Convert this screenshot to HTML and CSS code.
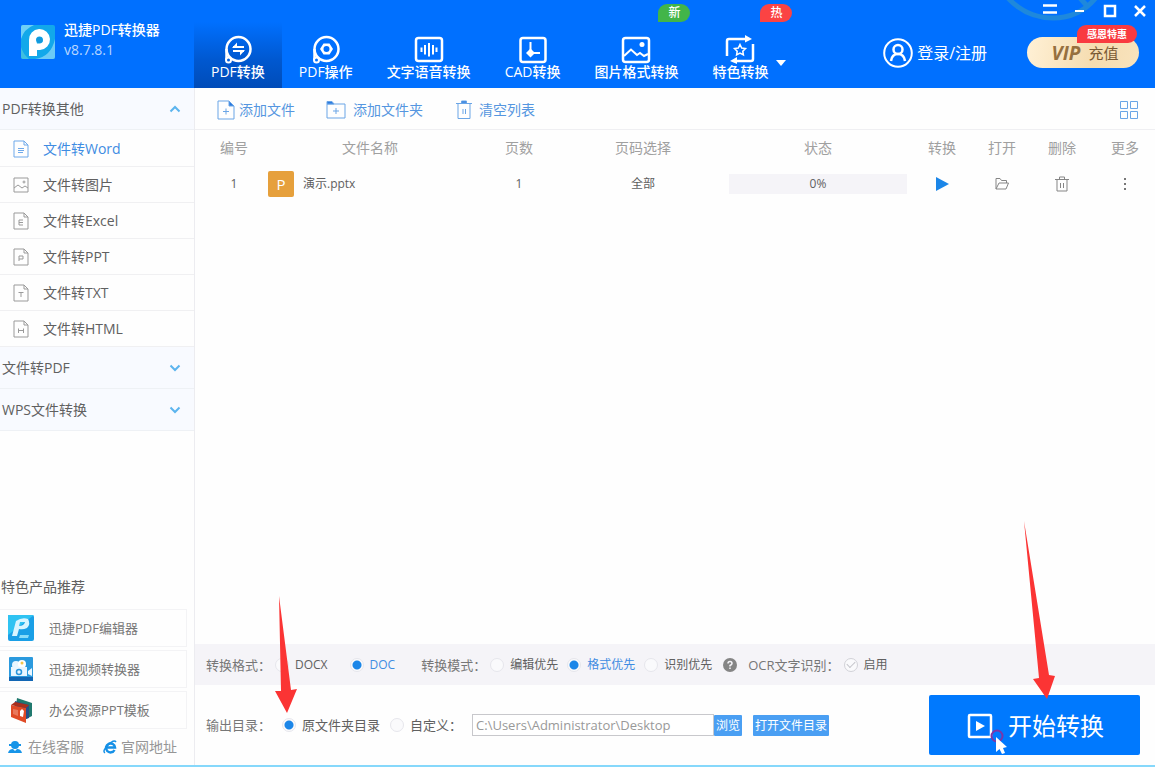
FILE: index.html
```html
<!DOCTYPE html>
<html lang="zh-CN">
<head>
<meta charset="utf-8">
<title>迅捷PDF转换器</title>
<link rel="stylesheet" href="styles.css">
</head>
<body>
<header class="header">
  <div class="brand">
    <svg class="brand-logo" viewBox="0 0 34 34" width="34" height="34" aria-hidden="true">
      <rect width="34" height="34" rx="2" fill="#12a8ea"/>
      <path d="M0 2Q0 0 2 0H13Q3 4 0 14Z" fill="#6fd0f6"/>
      <path d="M34 14V32Q34 34 32 34H14Q30 32 34 14Z" fill="#6ccbf6"/>
      <path d="M2 34Q0 34 0 32V22Q2 29 8 34Z" fill="#3fbfe0"/>
      <path fill-rule="evenodd" d="M8 31V15A10.500 10.500 0 1 1 19 25H16V31ZM16 18.500H19A3.500 3.500 0 1 0 15 15Z" fill="#fff"/>
      <circle cx="18.500" cy="15" r="3" fill="#1498dc"/>
    </svg>
    <div class="brand-text">
      <h1 class="brand-name">迅捷PDF转换器</h1>
      <span class="brand-version">v8.7.8.1</span>
    </div>
  </div>
  <nav class="tabs">
    <button class="tab tab-active" type="button">
      <svg viewBox="0 0 30 30" width="30" height="30" class="line-icon" aria-hidden="true"><circle cx="15.500" cy="15" r="12" stroke-width="2.500"/><path d="M3.500 15V26" stroke-width="2.500"/><circle cx="5.500" cy="26" r="2.500" fill="#0060e0" stroke-width="2"/><path d="M10 13H21M10 17H21" stroke-width="2"/><path d="M14 8.500L9 14H14ZM17 21.500L22 16H17Z" fill="#fff" stroke="none"/></svg>
      <span>PDF转换</span>
    </button>
    <button class="tab" type="button">
      <svg viewBox="0 0 30 30" width="30" height="30" class="line-icon" aria-hidden="true"><circle cx="15.500" cy="15" r="12" stroke-width="2.500"/><path d="M3.500 15V26" stroke-width="2.500"/><circle cx="5.500" cy="26" r="2.500" fill="#0070ff" stroke-width="2"/><path d="M12.500 9.500H18.500L22 15L18.500 20.500H12.500L9 15ZM15.500 12A3 3 0 1 0 15.500 18A3 3 0 1 0 15.500 12Z" fill="#fff" fill-rule="evenodd" stroke="none"/></svg>
      <span>PDF操作</span>
    </button>
    <button class="tab" type="button">
      <svg viewBox="0 0 30 30" width="30" height="30" class="line-icon" aria-hidden="true"><rect x="2" y="4" width="26" height="23" rx="2.500" stroke-width="2.500"/><path d="M7.500 13.500V18M11 11V20.500M15 9V22.500M19 11V20.500M22.500 13.500V18" stroke-width="2"/></svg>
      <span>文字语音转换</span>
    </button>
    <button class="tab" type="button">
      <svg viewBox="0 0 30 30" width="30" height="30" class="line-icon" aria-hidden="true"><rect x="2.500" y="4" width="25" height="24" rx="2.500" stroke-width="2.500"/><path d="M12.500 8V19H22" stroke-width="2"/><path d="M12.500 14.500L17 19L12.500 23.500L8 19Z" fill="#fff" stroke="none"/></svg>
      <span>CAD转换</span>
    </button>
    <button class="tab" type="button">
      <svg viewBox="0 0 30 30" width="30" height="30" class="line-icon" aria-hidden="true"><rect x="2" y="4" width="26" height="24" rx="2.500" stroke-width="2.500"/><path d="M3 22L10 15.500L16 21L19 19L23 22L27 20" stroke-width="2"/><circle cx="21" cy="10.500" r="2.500" fill="#fff" stroke="none"/></svg>
      <span>图片格式转换</span>
      <span class="badge badge-new">新</span>
    </button>
    <button class="tab" type="button">
      <svg viewBox="0 0 30 30" width="30" height="30" class="line-icon" aria-hidden="true"><path d="M2 22V7Q2 5 4 5H22M28 10V25Q28 27 26 27H10" stroke-width="2.500"/><path d="M20 1L27 5L20 8.500ZM12 23L5 27L12 30Z" fill="#fff" stroke="none"/><path d="M15 10.500L16.700 14L20.500 14.500L17.800 17.200L18.400 21L15 19.200L11.600 21L12.200 17.200L9.500 14.500L13.300 14Z" stroke-width="1.500"/></svg>
      <span>特色转换</span>
      <span class="badge badge-hot">热</span>
      <svg class="tab-caret" viewBox="0 0 10 6" width="10" height="6" aria-hidden="true"><path d="M0 0H10L5 6Z" fill="#fff"/></svg>
    </button>
  </nav>
  <div class="header-right">
    <svg class="header-arc" viewBox="0 0 110 24" width="110" height="24" aria-hidden="true"><path d="M2 -3Q21 18 48 18Q76 18 93 -5M75 -2L83 7" fill="none" stroke="#1e88dc" stroke-width="5"/></svg>
    <div class="window-controls">
      <button type="button" aria-label="菜单"><svg viewBox="0 0 16 16" width="16" height="16"><path d="M1 2.500H15M1 9.500H15" stroke="#fff" stroke-width="2.500"/></svg></button>
      <button type="button" aria-label="最小化"><svg viewBox="0 0 16 16" width="16" height="16"><path d="M3 8H12" stroke="#fff" stroke-width="2"/></svg></button>
      <button type="button" aria-label="最大化"><svg viewBox="0 0 16 16" width="16" height="16"><rect x="3" y="3" width="10" height="10" fill="none" stroke="#fff" stroke-width="2.500"/></svg></button>
      <button type="button" aria-label="关闭"><svg viewBox="0 0 16 16" width="16" height="16"><path d="M3 3L13 13M13 3L3 13" stroke="#fff" stroke-width="2.500"/></svg></button>
    </div>
    <div class="account">
      <button class="login" type="button">
        <svg viewBox="0 0 30 30" width="30" height="30" class="line-icon" aria-hidden="true"><circle cx="15" cy="15" r="13.800" stroke-width="2"/><circle cx="15" cy="11.500" r="4.500" stroke-width="2.500"/><path d="M8 23Q9 16 15 16T22 23" stroke-width="2.500"/></svg>
        <span>登录/注册</span>
      </button>
      <button class="vip" type="button">
        <span class="vip-mark">VIP</span><span>充值</span>
        <span class="vip-badge">感恩特惠</span>
      </button>
    </div>
  </div>
</header>

<div class="body">
  <aside class="sidebar">
    <button class="group" type="button"><span>PDF转换其他</span><svg viewBox="0 0 12 8" width="12" height="8" class="chevron" aria-hidden="true"><path d="M1.500 6.500L6 2L10.500 6.500"/></svg></button>
    <ul class="items">
      <li><a class="item item-active" href="#"><svg viewBox="0 0 16 18" width="16" height="18" aria-hidden="true"><path d="M1 1H11L15 5V17H1ZM11 1V5H15"/><path d="M5 8.500H11M5 10.500H11M5 12.500H10"/></svg>文件转Word</a></li>
      <li><a class="item" href="#"><svg viewBox="0 0 16 18" width="16" height="18" aria-hidden="true"><path d="M1 2H15V16H1ZM1 12L5 9L9 12L12 10L15 12"/><circle cx="11" cy="6" r="1"/></svg>文件转图片</a></li>
      <li><a class="item" href="#"><svg viewBox="0 0 16 18" width="16" height="18" aria-hidden="true"><path d="M1 1H11L15 5V17H1ZM11 1V5H15"/><path d="M10 8H6V13H10M6 10.500H10"/></svg>文件转Excel</a></li>
      <li><a class="item" href="#"><svg viewBox="0 0 16 18" width="16" height="18" aria-hidden="true"><path d="M1 1H11L15 5V17H1ZM11 1V5H15"/><path d="M6 13V8H10V11H6"/></svg>文件转PPT</a></li>
      <li><a class="item" href="#"><svg viewBox="0 0 16 18" width="16" height="18" aria-hidden="true"><path d="M1 1H11L15 5V17H1ZM11 1V5H15"/><path d="M5.500 8.500H10.500M8 8.500V13"/></svg>文件转TXT</a></li>
      <li><a class="item" href="#"><svg viewBox="0 0 16 18" width="16" height="18" aria-hidden="true"><path d="M1 1H11L15 5V17H1ZM11 1V5H15"/><path d="M5.500 8.500V13M10.500 8.500V13M5.500 10.500H10.500"/></svg>文件转HTML</a></li>
    </ul>
    <button class="group" type="button"><span>文件转PDF</span><svg viewBox="0 0 12 8" width="12" height="8" class="chevron" aria-hidden="true"><path d="M1.500 1.500L6 6L10.500 1.500"/></svg></button>
    <button class="group" type="button"><span>WPS文件转换</span><svg viewBox="0 0 12 8" width="12" height="8" class="chevron" aria-hidden="true"><path d="M1.500 1.500L6 6L10.500 1.500"/></svg></button>

    <section class="promo">
      <h2 class="promo-title">特色产品推荐</h2>
      <a class="promo-card" href="#">
        <svg viewBox="0 0 26 26" width="26" height="26" aria-hidden="true"><rect width="26" height="26" rx="2" fill="#1a9fe6"/><path d="M0 0H26L0 20Z" fill="#2fc3f2"/><path fill-rule="evenodd" d="M4 21L8 6Q14 2 20 4Q23 9 19 13Q15 15 11 14L9 21ZM12 7L11 11Q16 11 17 7Z" fill="#d9f5ff"/><path d="M12 20H21L20 23H11Z" fill="#8adcf8"/></svg>
        迅捷PDF编辑器
      </a>
      <a class="promo-card" href="#">
        <svg viewBox="0 0 26 26" width="26" height="26" aria-hidden="true"><rect x="1" y="1" width="24" height="24" rx="1" fill="#2b9ade"/><path d="M1 21H25V25H1Z" fill="#1266b4"/><circle cx="8" cy="9" r="4" fill="#e9f6ff"/><circle cx="14" cy="8" r="4" fill="#fff"/><circle cx="14" cy="7" r="1.500" fill="#f3c54b"/><path d="M3 11H19V20H3ZM20 15L24 12V20L20 18Z" fill="#eaf6ff"/><circle cx="11" cy="16" r="2.500" fill="none" stroke="#2b96dc" stroke-width="1.500"/></svg>
        迅捷视频转换器
      </a>
      <a class="promo-card" href="#">
        <svg viewBox="0 0 26 26" width="26" height="26" aria-hidden="true"><path d="M9 1L24 6V19L18 22L7 17Z" fill="#20796e"/><path d="M7 4L21 8V21L15 23L6 18Z" fill="#264f86"/><path d="M3 8L18 11V26L3 20Z" fill="#df4a26"/><path d="M3 8L7 5L21 8L18 11Z" fill="#a92f1c"/><path d="M5 12L10 13V19L5 17Z" fill="#e8785c"/><path d="M12 14L14 12L16 14L15 20L12 19Z" fill="#fff"/></svg>
        办公资源PPT模板
      </a>
      <div class="promo-links">
        <a href="#"><svg viewBox="0 0 14 14" width="14" height="14" aria-hidden="true"><circle cx="7" cy="5" r="4" fill="#1694e8"/><path d="M1 5H13" stroke="#1694e8" stroke-width="2"/><path d="M0 13Q1 9 5 9L7 11L9 9Q13 9 14 13Z" fill="#1694e8"/></svg>在线客服</a>
        <a href="#"><svg viewBox="0 0 14 14" width="14" height="14" aria-hidden="true"><path d="M11.500 10A4.500 4.500 0 1 1 12 7.500H4" fill="none" stroke="#1590e6" stroke-width="2.500"/><path d="M2 13Q-1 11 5 5Q11 -1 13 2" fill="none" stroke="#1590e6" stroke-width="1.500"/></svg>官网地址</a>
      </div>
    </section>
  </aside>

  <main class="main">
    <div class="toolbar">
      <button type="button"><svg viewBox="0 0 18 20" width="18" height="20" aria-hidden="true"><path d="M1 1H12L17 6V19H1Z"/><path d="M12 1V6H17Z" fill="#2b7be0"/><path d="M6 11.500H12M9 8.500V14.500"/></svg>添加文件</button>
      <button type="button"><svg viewBox="0 0 20 20" width="20" height="20" aria-hidden="true"><path d="M1 4H19V18H1Z"/><path d="M1 1.500H6L8 4H1Z" fill="#2b7be0"/><path d="M7 11H13M10 8V14"/></svg>添加文件夹</button>
      <button type="button"><svg viewBox="0 0 16 20" width="16" height="20" aria-hidden="true"><path d="M0 3.500H16M2 4V18.500H14V4M7 9V14M9.500 9V14"/><path d="M5.500 1H10.500V3H5.500Z" fill="#2b7be0"/></svg>清空列表</button>
      <button class="view-toggle" type="button" aria-label="切换视图"><svg viewBox="0 0 20 20" width="20" height="20" aria-hidden="true"><path d="M1.500 1.500H8.500V8.500H1.500ZM11.500 1.500H18.500V8.500H11.500ZM1.500 11.500H8.500V18.500H1.500ZM11.500 11.500H18.500V18.500H11.500Z"/></svg></button>
    </div>
    <div class="list">
      <table class="files">
        <colgroup>
          <col class="col-no"><col class="col-name"><col class="col-pages"><col class="col-range"><col class="col-status"><col class="col-convert"><col class="col-open"><col class="col-delete"><col class="col-more">
        </colgroup>
        <thead>
          <tr><th>编号</th><th>文件名称</th><th>页数</th><th>页码选择</th><th>状态</th><th>转换</th><th>打开</th><th>删除</th><th>更多</th></tr>
        </thead>
        <tbody>
          <tr>
            <td>1</td>
            <td><div class="file"><span class="file-type">P</span>演示.pptx</div></td>
            <td>1</td>
            <td>全部</td>
            <td><div class="progress">0%</div></td>
            <td><button type="button" aria-label="转换"><svg viewBox="0 0 16 16" width="16" height="16"><path d="M2 1L15 8L2 15Z" fill="#1b86e8"/></svg></button></td>
            <td><button type="button" aria-label="打开"><svg viewBox="0 0 16 16" width="16" height="16" class="row-icon"><path d="M2 13V2.500H6L7.500 4.500H12.500V7M2 13L5 7H14.500L12 13Z"/></svg></button></td>
            <td><button type="button" aria-label="删除"><svg viewBox="0 0 16 16" width="16" height="16" class="row-icon"><path d="M1 3.500H15M5.500 3V1H10.500V3M3 4V15H13V4M6.500 7V12M9.500 7V12"/></svg></button></td>
            <td><button type="button" aria-label="更多"><svg viewBox="0 0 16 16" width="16" height="16"><path d="M7 2H9V4H7ZM7 7H9V9H7ZM7 12H9V14H7Z" fill="#777"/></svg></button></td>
          </tr>
        </tbody>
      </table>
    </div>

    <div class="options">
      <span class="caption">转换格式：</span>
      <label class="choice"><input type="radio" name="format">DOCX</label>
      <label class="choice choice-far"><input type="radio" name="format" checked><span>DOC</span></label>
      <span class="caption caption-next">转换模式：</span>
      <label class="choice"><input type="radio" name="mode">编辑优先</label>
      <label class="choice choice-near"><input type="radio" name="mode" checked><span>格式优先</span></label>
      <label class="choice choice-near"><input type="radio" name="mode">识别优先</label>
      <button class="help" type="button" aria-label="帮助"><svg viewBox="0 0 14 14" width="14" height="14"><circle cx="7" cy="7" r="7" fill="#858585"/><path d="M5 5.500Q5 3.500 7 3.500T9 5.500Q9 6.500 7 7.500V8.500M7 9.500V11" fill="none" stroke="#f5f4f8" stroke-width="1.500"/></svg></button>
      <span class="caption">OCR文字识别：</span>
      <label class="choice"><input type="checkbox">启用</label>
    </div>

    <div class="output">
      <span class="caption">输出目录：</span>
      <span class="guide-anchor">
        <label class="choice choice-dir"><input type="radio" name="dir" checked>原文件夹目录</label>
        <svg class="guide guide-dir" viewBox="0 0 24 118" width="24" height="118" aria-hidden="true"><path d="M5 0L17 94L23 93L13 117L1 95H7Z" fill="#fb3434"/></svg>
      </span>
      <label class="choice choice-dir choice-custom"><input type="radio" name="dir">自定义：</label>
      <div class="path">
        <input type="text" aria-label="输出路径" value="C:\Users\Administrator\Desktop">
        <button class="small-btn" type="button">浏览</button>
      </div>
      <button class="small-btn open-dir" type="button">打开文件目录</button>
      <div class="start-wrap">
        <button class="start" type="button">
          <svg viewBox="0 0 26 26" width="26" height="26" aria-hidden="true"><rect x="2" y="2" width="22" height="22" rx="1" fill="none" stroke="#fff" stroke-width="2.500"/><path d="M9 8L18 13L9 18Z" fill="#fff"/></svg>
          开始转换
        </button>
        <svg class="guide guide-start" viewBox="0 0 34 180" width="34" height="180" aria-hidden="true"><path d="M1 0L26 154L32 155L24 178L10 158L16 157Z" fill="#fb3434"/></svg>
        <svg class="pointer" viewBox="0 0 20 26" width="20" height="26" aria-hidden="true"><circle cx="7" cy="7" r="5.500" fill="none" stroke="#7b36a8" stroke-width="2"/><path d="M6 8V23L9.500 20L12 25L15 24L13 19L17 18Z" fill="#fff"/></svg>
      </div>
    </div>
  </main>
</div>
</body>
</html>
```

FILE: styles.css
```css
* { box-sizing: border-box; }

body {
  margin: 0;
  min-height: 100vh;
  display: flex;
  flex-direction: column;
  font: 14px/20px "Open Sans", "Noto Sans CJK SC", sans-serif;
  color: #606060;
  background: #fefefe;
  border-bottom: 2px solid #86d8fb;
}

button {
  margin: 0;
  padding: 0;
  border: 0;
  background: none;
  font: inherit;
  color: inherit;
}

svg { display: block; flex: none; }
a { color: inherit; text-decoration: none; }

.line-icon { fill: none; stroke: #fff; }

/* Header */
.header {
  display: flex;
  height: 88px;
  background: #0070ff;
  color: #fff;
}

.brand {
  display: flex;
  gap: 9px;
  width: 194px;
  padding: 20px 0 0 21px;
}

.brand-logo { margin-top: 5px; }
.brand-text { display: flex; flex-direction: column; }
.brand-name { margin: 0; font-size: 14px; font-weight: 500; line-height: 20px; }
.brand-version { color: #b9d7ff; }

.tabs { display: flex; }

.tab {
  position: relative;
  display: flex;
  flex-direction: column;
  align-items: center;
  padding: 34px 17px 0;
  line-height: 16px;
  font-weight: 500;
  white-space: nowrap;
}

.tab-active { background: linear-gradient(#0070ff 22px, #0058d0 60px, #004cb8); }

.tab-caret { position: absolute; left: 81px; top: 60px; }

.badge {
  position: absolute;
  top: 4px;
  width: 32px;
  height: 18px;
  border-radius: 9px 9px 9px 0;
  font-size: 12px;
  line-height: 18px;
}

.badge-new { left: 81px; background: #42b549; }
.badge-hot { left: 65px; background: #fb4343; }

.header-right {
  position: relative;
  display: flex;
  flex-direction: column;
  align-items: flex-end;
  gap: 17px;
  margin-left: auto;
}

.header-arc { position: absolute; top: 0; right: 40px; }

.window-controls {
  position: relative;
  display: flex;
  gap: 14px;
  height: 20px;
  padding: 2px 7px 0 0;
}

.account { display: flex; align-items: center; gap: 40px; padding-right: 16px; }
.login { display: flex; align-items: center; gap: 4px; font-size: 16px; }

.vip {
  position: relative;
  display: flex;
  align-items: center;
  justify-content: center;
  gap: 8px;
  width: 112px;
  height: 31px;
  padding-left: 4px;
  border-radius: 16px;
  background: linear-gradient(100deg, #fff1d6, #f5dcb0 60%, #f8e3bd);
  color: #7a5a34;
  font-size: 15px;
}

.vip-mark { font-size: 19px; font-weight: 700; font-style: italic; color: #96703f; }

.vip-badge {
  position: absolute;
  top: -12px;
  right: 2px;
  width: 60px;
  height: 18px;
  border-radius: 9px 9px 9px 0;
  background: #f93a40;
  color: #fff;
  font-size: 10px;
  font-weight: 700;
  line-height: 18px;
}

/* Body */
.body { display: flex; flex: 1; }

.sidebar {
  display: flex;
  flex-direction: column;
  width: 195px;
  flex: none;
  border-right: 1px solid #ececf0;
}

.group {
  display: flex;
  align-items: center;
  justify-content: space-between;
  height: 42px;
  padding: 1px 13px 0 2px;
  border-bottom: 1px solid #eef1f5;
  background: #f8faff;
}

.chevron { fill: none; stroke: #5cb4ee; stroke-width: 2; }

.items { margin: 0; padding: 1px 0 0; list-style: none; }

.item {
  display: flex;
  align-items: center;
  gap: 14px;
  height: 36px;
  padding-left: 13px;
  border-bottom: 1px solid #f0f0f2;
}

.item svg { fill: none; stroke: #9a9a9a; }
.item-active { color: #3f8ce2; }
.item-active svg { stroke: #6fa9ea; }

.promo { margin-top: auto; padding-bottom: 8px; }
.promo-title { margin: 0 0 12px; padding-left: 1px; font-size: 14px; font-weight: 400; }

.promo-card {
  display: flex;
  align-items: center;
  gap: 15px;
  height: 38px;
  margin: 0 7px 3px 0;
  padding-left: 8px;
  border: 1px solid #f3f3f5;
  border-left: 0;
  color: #777;
  font-size: 13px;
}

.promo-links { display: flex; gap: 19px; padding: 5px 0 0 8px; color: #969696; }
.promo-links a { display: flex; align-items: center; gap: 6px; }
.promo-links a + a { gap: 4px; }

.main { display: flex; flex-direction: column; flex: 1; min-width: 0; }

.toolbar {
  display: flex;
  align-items: center;
  gap: 31px;
  height: 42px;
  padding: 2px 16px 0 22px;
  border-bottom: 1px solid #efeff2;
  color: #5596e0;
}

.toolbar button { display: flex; align-items: center; gap: 4px; }
.toolbar button + button { gap: 7px; }
.toolbar button:nth-child(3) { margin-left: 2px; }
.toolbar svg { fill: none; stroke: #6aa5e6; }
.toolbar .view-toggle { margin-left: auto; }

.list { flex: 1; }

.files { width: 100%; table-layout: fixed; border-collapse: collapse; }
.col-no { width: 73px; }
.col-pages { width: 94px; }
.col-range { width: 154px; }
.col-status { width: 196px; }
.col-convert, .col-delete { width: 52px; }
.col-open { width: 68px; }
.col-more { width: 67px; }

.files th, .files td { height: 36px; padding: 0; text-align: center; }
.files th { color: #a0a0a0; font-weight: 400; }
.files td { font-size: 12px; }
.files th:first-child, .files td:first-child { padding-left: 5px; }
.files th:last-child, .files td:last-child { padding-left: 7px; }
.files td button { display: block; margin: 0 auto; }
.row-icon { fill: none; stroke: #858585; }

.file { display: flex; align-items: center; gap: 9px; }

.file-type {
  width: 26px;
  height: 26px;
  border-radius: 2px;
  background: #e6a03c;
  color: #fff;
  font-size: 15px;
  line-height: 26px;
}

.progress { height: 20px; margin: 0 9px; background: #f5f4f8; }

/* Conversion options */
.options {
  display: flex;
  align-items: center;
  height: 41px;
  padding-left: 11px;
  background: #f5f4f8;
  font-size: 12px;
  white-space: nowrap;
}

.caption { font-size: 13px; color: #777; }
.caption-next { margin-left: 26px; }

.choice { display: flex; align-items: center; gap: 6px; margin-left: 4px; }
.choice-near { margin-left: 9px; }
.choice-far { margin-left: 22px; }
.options .choice span { color: #3f8ce2; }

.choice input {
  appearance: none;
  width: 14px;
  height: 14px;
  margin: 0;
  border: 1px solid #e6e6ec;
  border-radius: 7px;
  background: #fafafc;
}

.choice input[type="radio"]:checked { background: radial-gradient(circle, #1b86e8 4px, #fafafc 5px); }

.choice input[type="checkbox"] {
  display: grid;
  place-items: center;
  border-color: #d2d2d8;
}

.choice input[type="checkbox"]::after {
  content: "";
  width: 7px;
  height: 4px;
  margin-bottom: 2px;
  border: solid #c4c4ca;
  border-width: 0 0 1px 1px;
  transform: rotate(-45deg);
}

.help { margin: 0 11px; }

/* Output */
.output {
  display: flex;
  align-items: center;
  height: 80px;
  padding: 0 15px 0 11px;
  white-space: nowrap;
}

.guide-anchor { position: relative; margin-left: 7px; }
.choice-dir { font-size: 13px; }
.choice-custom { margin-left: 10px; }

.path { display: flex; align-items: center; margin-left: 10px; }

.path input {
  width: 242px;
  height: 22px;
  padding: 0 3px;
  border: 1px solid #c8c8cc;
  background: #fff;
  color: #999;
  font: inherit;
  font-size: 13px;
}

.small-btn {
  height: 21px;
  padding: 0 2px;
  border-radius: 1px;
  background: #4a9ff3;
  color: #fff;
  font-size: 12px;
  line-height: 21px;
}

.open-dir { margin-left: 11px; }

.start-wrap { position: relative; margin-left: auto; }

.start {
  display: flex;
  align-items: center;
  justify-content: center;
  gap: 15px;
  width: 211px;
  height: 60px;
  padding: 2px 0 0 2px;
  border-radius: 2px;
  background: #0079fe;
  color: #fff;
  font-size: 24px;
}

.guide { position: absolute; pointer-events: none; }
.guide-dir { left: -4px; bottom: 21px; }
.guide-start { left: 94px; bottom: 54px; }
.pointer { position: absolute; left: 61px; top: 34px; pointer-events: none; }
```
